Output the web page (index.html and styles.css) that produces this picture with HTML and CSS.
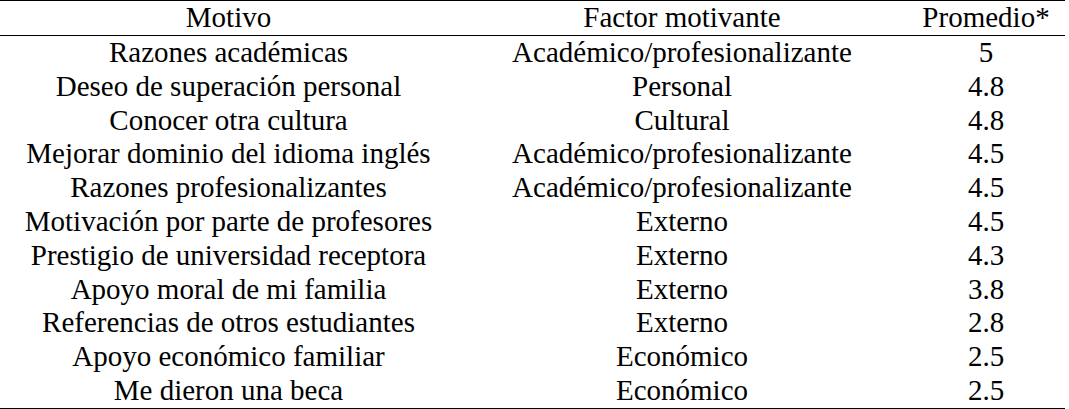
FILE: index.html
```html
<!DOCTYPE html>
<html lang="es">
<head>
<meta charset="utf-8">
<link rel="stylesheet" href="styles.css">
</head>
<body>
<table class="tbl">
<thead>
<tr><th class="c1">Motivo</th><th class="c2">Factor motivante</th><th class="c3">Promedio*</th></tr>
</thead>
<tbody>
<tr><td>Razones académicas</td><td>Académico/profesionalizante</td><td>5</td></tr>
<tr><td>Deseo de superación personal</td><td>Personal</td><td>4.8</td></tr>
<tr><td>Conocer otra cultura</td><td>Cultural</td><td>4.8</td></tr>
<tr><td>Mejorar dominio del idioma inglés</td><td>Académico/profesionalizante</td><td>4.5</td></tr>
<tr><td>Razones profesionalizantes</td><td>Académico/profesionalizante</td><td>4.5</td></tr>
<tr><td>Motivación por parte de profesores</td><td>Externo</td><td>4.5</td></tr>
<tr><td>Prestigio de universidad receptora</td><td>Externo</td><td>4.3</td></tr>
<tr><td>Apoyo moral de mi familia</td><td>Externo</td><td>3.8</td></tr>
<tr><td>Referencias de otros estudiantes</td><td>Externo</td><td>2.8</td></tr>
<tr><td>Apoyo económico familiar</td><td>Económico</td><td>2.5</td></tr>
<tr><td>Me dieron una beca</td><td>Económico</td><td>2.5</td></tr>
</tbody>
</table>
</body>
</html>
```
FILE: styles.css
```css
html, body {
  margin: 0;
  padding: 0;
  background: #fff;
}
.tbl {
  border-collapse: collapse;
  width: 1065px;
  font-family: "Liberation Serif", "Times New Roman", serif;
  font-size: 29px;
  color: #000;
  border-top: 1px solid #000;
  border-bottom: 2px solid #000;
}
.tbl th, .tbl td {
  padding: 0;
  text-align: center;
  font-weight: normal;
  line-height: 33.8px;
  height: 33.8px;
  white-space: nowrap;
}
.tbl thead th {
  border-bottom: 1px solid #000;
  height: 34px;
}
.c1 { width: 457px; }
.c2 { width: 450px; }
.c3 { width: 158px; }
```
